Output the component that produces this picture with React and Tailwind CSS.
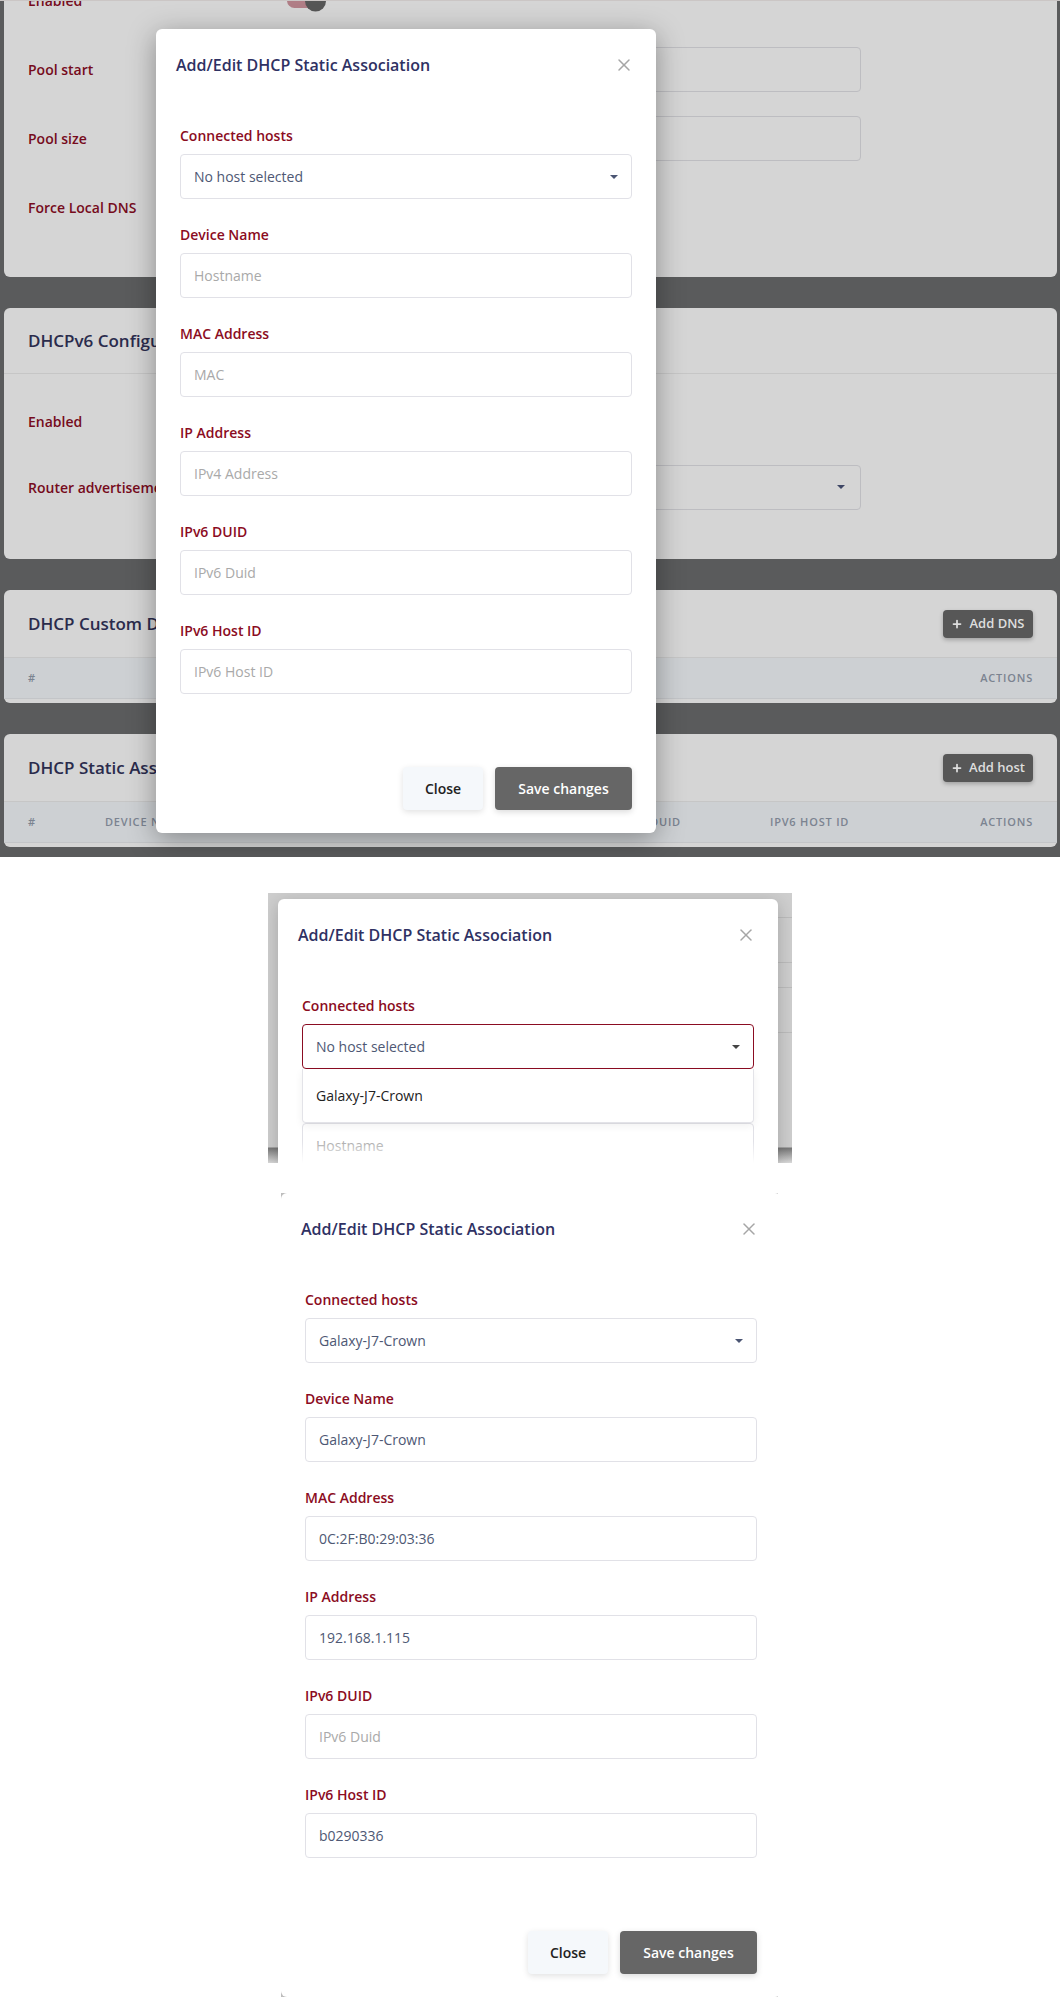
import React from "react";
import { X, Plus } from "lucide-react";

const Caret = ({ color = "#4b5573" }) => (
  <svg width="8" height="4" viewBox="0 0 8 4">
    <path d="M0 0h8L4 4z" fill={color} />
  </svg>
);

const Field = ({ label, value, placeholder, select, open }) => (
  <div className="relative flex flex-col">
    <label className="h-5 leading-5 text-[14px] font-semibold text-[#8b0c22]">{label}</label>
    <div
      className={`mt-2 flex h-[45px] items-center justify-between rounded-[4px] border bg-white px-[13px] text-[14px] ${
        open ? "border-[#8b0c22]" : "border-[#e1e1e7]"
      }`}
    >
      <span className={value ? "text-[#4e5874]" : "text-[#a9a9a9]"}>{value || placeholder}</span>
      {select && <Caret color={open ? "#444" : "#4b5573"} />}
    </div>
    {open && (
      <div className="absolute left-0 right-0 top-[73px] z-10 flex h-[54px] items-center rounded-b-[4px] border border-t-0 border-[#e3e3e8] bg-white px-[13px] text-[14px] text-[#222] shadow-[0_3px_8px_rgba(0,0,0,0.06)]">
        Galaxy-J7-Crown
      </div>
    )}
  </div>
);

// compact: only what shows in the cropped dropdown shot
const Modal = ({ v = {}, open = false, compact = false, shadow = "" }) => (
  <div className={`flex h-[804px] w-[500px] flex-col rounded-[6px] bg-white ${shadow}`}>
    <div className="flex h-[72px] items-center justify-between pl-5 pr-[22px]">
      <h5 className="text-[16px] font-semibold text-[#2f3163]">Add/Edit DHCP Static Association</h5>
      <X size={20} strokeWidth={1.8} color="#a6a6a6" />
    </div>
    <div className="flex flex-col gap-[26px] px-6 pt-[25px]">
      <Field label="Connected hosts" value={v.host || "No host selected"} select open={open} />
      <Field label="Device Name" value={v.name} placeholder="Hostname" />
      {!compact && (
        <>
          <Field label="MAC Address" value={v.mac} placeholder="MAC" />
          <Field label="IP Address" value={v.ip} placeholder="IPv4 Address" />
          <Field label="IPv6 DUID" value={v.duid} placeholder="IPv6 Duid" />
          <Field label="IPv6 Host ID" value={v.hostid} placeholder="IPv6 Host ID" />
        </>
      )}
    </div>
    {!compact && (
      <div className="mt-auto flex justify-end gap-3 px-6 pb-[23px]">
        <button className="h-[43px] w-[80px] rounded-[4px] bg-[#f5f8fb] text-[14px] font-semibold text-[#222] shadow-[0_2px_6px_rgba(0,0,0,0.12)]">
          Close
        </button>
        <button className="h-[43px] w-[137px] rounded-[4px] bg-[#666666] text-[14px] font-semibold text-white shadow-[0_2px_6px_rgba(0,0,0,0.15)]">
          Save changes
        </button>
      </div>
    )}
  </div>
);

const Row = ({ label, h = "h-[69px]", children }) => (
  <div className={`flex ${h} items-center`}>
    <div className="w-[259px] text-[14px] font-semibold text-[#760b1c]">{label}</div>
    <div className="flex w-[574px] items-center">{children}</div>
  </div>
);

const DimInput = ({ select }) => (
  <div className="flex h-[45px] w-full items-center justify-end rounded-[4px] border border-[#bdbdc1] pr-[15px]">
    {select && <Caret color="#3e4665" />}
  </div>
);

const AddButton = ({ text }) => (
  <button className="flex h-[28px] w-[90px] items-center justify-center gap-[6px] rounded-[4px] bg-[#575757] text-[13px] font-semibold text-[#dedede] shadow-[0_2px_4px_rgba(0,0,0,0.25)]">
    <Plus size={12} strokeWidth={3.5} />
    {text}
  </button>
);

const TableCard = ({ title, button, cols }) => (
  <div className="rounded-[6px] bg-[#d5d5d5] pb-[4px]">
    <div className="flex h-[68px] items-center justify-between border-b border-[#c6c6c6] px-6">
      <h4 className="text-[17px] font-semibold text-[#2a2b4c]">{title}</h4>
      <AddButton text={button} />
    </div>
    <div className="flex h-[41px] items-center border-b border-[#c3c5c8] bg-[#cdd0d3] px-6 text-[11px] font-semibold uppercase tracking-[0.8px] text-[#7b8390]">
      {cols.map(([name, w]) => (
        <div key={name} className={w}>
          {name}
        </div>
      ))}
      <div className="flex-1 text-right">Actions</div>
    </div>
  </div>
);

const App = () => {
  return (
    <div className="min-h-[2000px] bg-white font-['Open_Sans',sans-serif]">
      {/* page behind the modal */}
      <div className="relative h-[857px] overflow-hidden border-t border-[#cbc6c5] bg-[#5a5b5c]">
        <div className="flex flex-col gap-[31px] pl-[4px] pr-[3px]">
          <div className="-mt-[35px] rounded-[6px] bg-[#d5d5d5] px-6 pb-[35px]">
            <Row label="Enabled">
              <div className="relative h-[15px] w-[36px] rounded-full bg-[#b07e86]">
                <div className="absolute -right-[3px] top-1/2 h-[21px] w-[21px] -translate-y-1/2 rounded-full bg-[#565656]" />
              </div>
            </Row>
            <Row label="Pool start">
              <DimInput />
            </Row>
            <Row label="Pool size">
              <DimInput />
            </Row>
            <Row label="Force Local DNS" />
          </div>

          <div className="rounded-[6px] bg-[#d5d5d5] pb-[39px]">
            <div className="flex h-[66px] items-center border-b border-[#c6c6c6] px-6">
              <h4 className="text-[17px] font-semibold text-[#2a2b4c]">DHCPv6 Configuration</h4>
            </div>
            <div className="px-6 pt-[14px]">
              <Row label="Enabled" h="h-[66px]" />
              <Row label="Router advertisement" h="h-[66px]">
                <DimInput select />
              </Row>
            </div>
          </div>

          <TableCard title="DHCP Custom DNS" button="Add DNS" cols={[["#", "w-[180px]"]]} />
          <TableCard
            title="DHCP Static Associations"
            button="Add host"
            cols={[
              ["#", "w-[77px]"],
              ["Device Name", "w-[195px]"],
              ["MAC Address", "w-[160px]"],
              ["IP Address", "w-[160px]"],
              ["IPv6 DUID", "w-[150px]"],
              ["IPv6 Host ID", "w-[150px]"],
            ]}
          />
        </div>
        <div className="absolute left-[156px] top-[28px]">
          <Modal shadow="shadow-[0_6px_28px_rgba(0,0,0,0.35)]" />
        </div>
      </div>

      {/* dropdown open */}
      <div className="relative ml-[268px] mt-[36px] h-[270px] w-[524px] overflow-hidden bg-[linear-gradient(to_bottom,#cecece_0px,#cecece_254px,#777777_255px,#dcdcdc_270px)]">
        <div className="absolute right-0 top-[24px] h-px w-[14px] bg-[#bcbcbc]" />
        <div className="absolute right-0 top-[69px] h-px w-[14px] bg-[#bcbcbc]" />
        <div className="absolute right-0 top-[94px] h-px w-[14px] bg-[#bcbcbc]" />
        <div className="absolute right-0 top-[139px] h-px w-[14px] bg-[#bcbcbc]" />
        <div className="absolute left-[10px] top-[6px]">
          <Modal open compact shadow="shadow-[0_4px_18px_rgba(0,0,0,0.2)]" />
        </div>
        <div className="absolute bottom-0 left-[10px] h-[22px] w-[500px] bg-linear-to-b from-white/0 to-white" />
      </div>

      {/* filled in */}
      <div className="ml-[281px] mt-[30px] w-[497px] overflow-hidden bg-[#bdbdbd]">
        <Modal
          v={{
            host: "Galaxy-J7-Crown",
            name: "Galaxy-J7-Crown",
            mac: "0C:2F:B0:29:03:36",
            ip: "192.168.1.115",
            hostid: "b0290336",
          }}
        />
      </div>
    </div>
  );
};

export default App;
